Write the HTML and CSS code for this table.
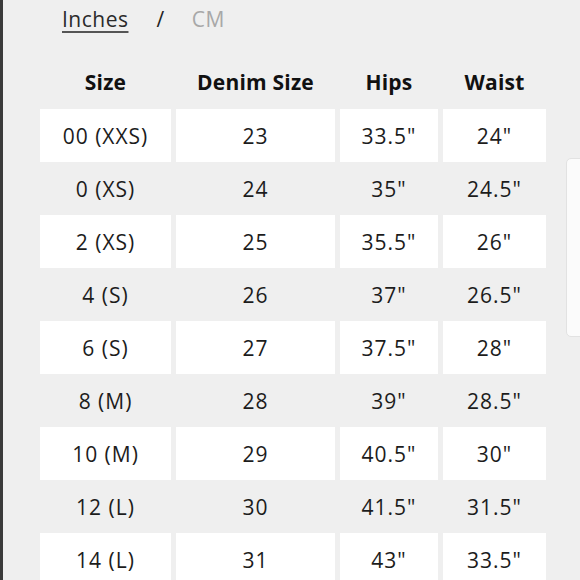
FILE: index.html
```html
<!DOCTYPE html>
<html>
<head>
<meta charset="utf-8">
<link rel="stylesheet" href="styles.css">
</head>
<body>
<div class="page">
  <div class="units">
    <span class="unit active">Inches</span>
    <span class="sep">/</span>
    <span class="unit">CM</span>
  </div>
  <div class="table">
    <div class="row head"><div class="cell">Size</div><div class="cell">Denim Size</div><div class="cell">Hips</div><div class="cell">Waist</div></div>
    <div class="row white"><div class="cell">00 (XXS)</div><div class="cell">23</div><div class="cell">33.5"</div><div class="cell">24"</div></div>
    <div class="row"><div class="cell">0 (XS)</div><div class="cell">24</div><div class="cell">35"</div><div class="cell">24.5"</div></div>
    <div class="row white"><div class="cell">2 (XS)</div><div class="cell">25</div><div class="cell">35.5"</div><div class="cell">26"</div></div>
    <div class="row"><div class="cell">4 (S)</div><div class="cell">26</div><div class="cell">37"</div><div class="cell">26.5"</div></div>
    <div class="row white"><div class="cell">6 (S)</div><div class="cell">27</div><div class="cell">37.5"</div><div class="cell">28"</div></div>
    <div class="row"><div class="cell">8 (M)</div><div class="cell">28</div><div class="cell">39"</div><div class="cell">28.5"</div></div>
    <div class="row white"><div class="cell">10 (M)</div><div class="cell">29</div><div class="cell">40.5"</div><div class="cell">30"</div></div>
    <div class="row"><div class="cell">12 (L)</div><div class="cell">30</div><div class="cell">41.5"</div><div class="cell">31.5"</div></div>
    <div class="row white"><div class="cell">14 (L)</div><div class="cell">31</div><div class="cell">43"</div><div class="cell">33.5"</div></div>
  </div>
  <div class="side-panel"></div>
</div>
</body>
</html>
```

FILE: styles.css
```css
html, body {
  margin: 0;
  padding: 0;
  background: #efefef;
}
body {
  font-family: "Open Sans", "Liberation Sans", sans-serif;
  color: #1c1c1c;
  overflow: hidden;
  height: 580px;
}
.page {
  position: relative;
  height: 580px;
  border-left: 3px solid #3a3a3a;
  padding-left: 37px;
  box-sizing: border-box;
}
.units {
  height: 38px;
  line-height: 38px;
  margin-bottom: 17px;
  padding-left: 22px;
  font-size: 21px;
  letter-spacing: 0.5px;
  display: flex;
}
.unit.active {
  color: #2a2a2a;
  text-decoration: underline;
  text-decoration-thickness: 2px;
  text-underline-offset: 4px;
  text-decoration-color: #555;
}
.sep {
  margin: 0 27px 0 28px;
  color: #222;
}
.unit:last-child {
  color: #a8a8a8;
}
.row {
  display: grid;
  grid-template-columns: 131px 159px 98px 103px;
  column-gap: 5px;
  height: 53px;
}
.row.head {
  height: 54px;
  font-weight: 700;
  color: #111;
}
.cell {
  display: flex;
  align-items: center;
  justify-content: center;
  font-size: 21px;
  letter-spacing: 1px;
}
.row.head .cell {
  letter-spacing: 0.2px;
}
.row.white .cell {
  background: #ffffff;
}
.side-panel {
  position: absolute;
  left: 563px;
  top: 158px;
  width: 24px;
  height: 179px;
  background: #fbfbfb;
  border: 1px solid #e2e2e2;
  border-radius: 5px;
  box-sizing: border-box;
}
```
